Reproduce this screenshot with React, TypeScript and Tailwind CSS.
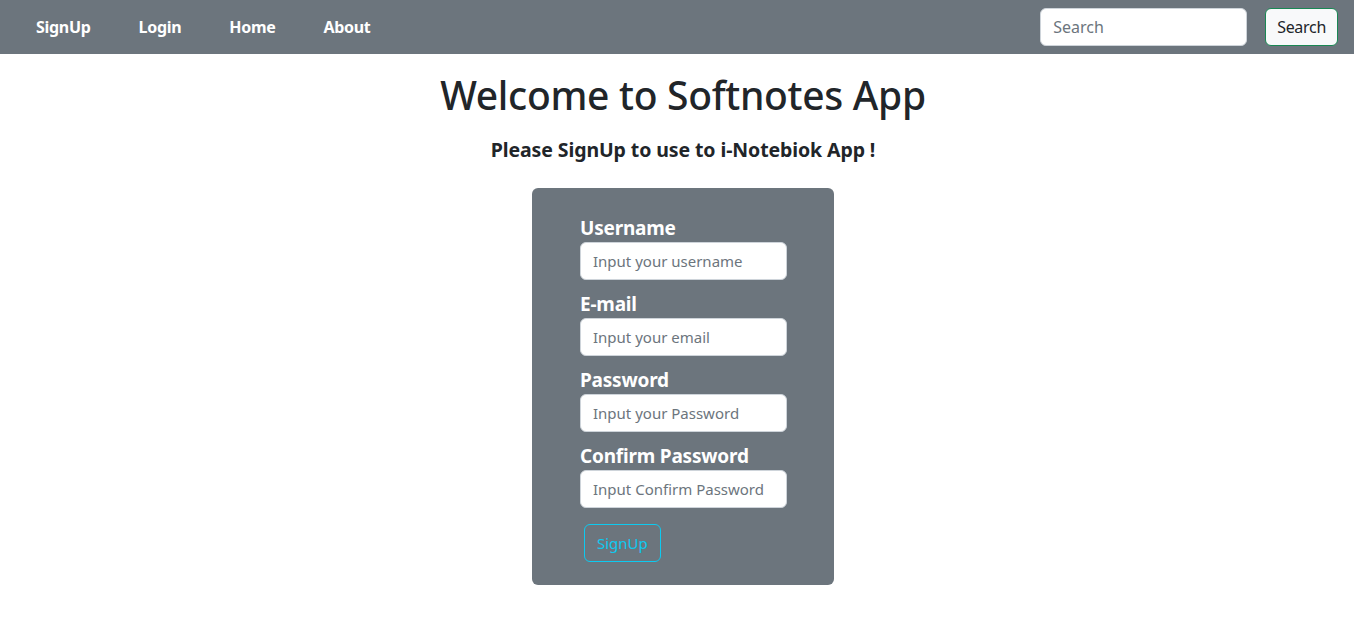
import { useState } from 'react';

const font = { fontFamily: '"Noto Sans", "Open Sans", sans-serif' };

const fields = [
  { label: 'Username', placeholder: 'Input your username', type: 'text' },
  { label: 'E-mail', placeholder: 'Input your email', type: 'email' },
  { label: 'Password', placeholder: 'Input your Password', type: 'password' },
  { label: 'Confirm Password', placeholder: 'Input Confirm Password', type: 'password' },
];

const Navbar = () => {
  const [query, setQuery] = useState('');
  return (
    <nav className="h-[54px] bg-[#6c757d] flex items-center justify-between pl-[12px] pr-[16px]">
      <ul className="flex items-center">
        {['SignUp', 'Login', 'Home', 'About'].map(link => (
          <li key={link}>
            <a href="#" className="block px-[24px] pb-[1px] text-[16px] font-bold text-white tracking-[-0.3px]">
              {link}
            </a>
          </li>
        ))}
      </ul>
      <form className="flex items-center gap-[18px]" onSubmit={e => e.preventDefault()}>
        <input
          value={query}
          onChange={e => setQuery(e.target.value)}
          placeholder="Search"
          className="w-[207px] h-[38px] px-[12px] rounded-[6px] bg-white border border-[#ced4da] text-[16px] text-[#212529] placeholder:text-[#6c757d] outline-none"
        />
        <button className="h-[38px] px-[11px] rounded-[6px] bg-[#f8f9fa] border border-[#198754] text-[16px] text-[#212529] tracking-[-0.3px]">
          Search
        </button>
      </form>
    </nav>
  );
};

export default function App() {
  return (
    <div className="min-h-screen bg-white text-[#212529]" style={font}>
      <Navbar />
      <main className="flex flex-col items-center pl-[12px]">
        <h1 className="mt-[17px] text-[39px] leading-[48px] font-medium tracking-[-0.3px]">Welcome to Softnotes App</h1>
        <h5 className="mt-[19px] text-[19.5px] leading-[24px] font-bold tracking-[-0.1px]">Please SignUp to use to i-Notebiok App !</h5>
        <form
          className="mt-[26px] w-[302px] h-[397px] rounded-[6px] bg-[#6c757d] pl-[48px] pt-[28px] flex flex-col"
          onSubmit={e => e.preventDefault()}
        >
          {fields.map(f => (
            <div key={f.label} className="mb-[12px]">
              <label className="block mb-[2px] text-[19px] leading-[24px] font-bold text-white tracking-[-0.2px]">{f.label}</label>
              <input
                type={f.type}
                placeholder={f.placeholder}
                className="w-[207px] h-[38px] px-[12px] rounded-[6px] bg-white border border-[#ced4da] text-[15px] text-[#212529] placeholder:text-[#6c757d] outline-none"
              />
            </div>
          ))}
          <div className="pl-[4px] pt-[4px]">
            <button className="h-[38px] px-[12px] rounded-[6px] border border-[#0dcaf0] text-[15px] text-[#0dcaf0]">
              SignUp
            </button>
          </div>
        </form>
      </main>
    </div>
  );
}
